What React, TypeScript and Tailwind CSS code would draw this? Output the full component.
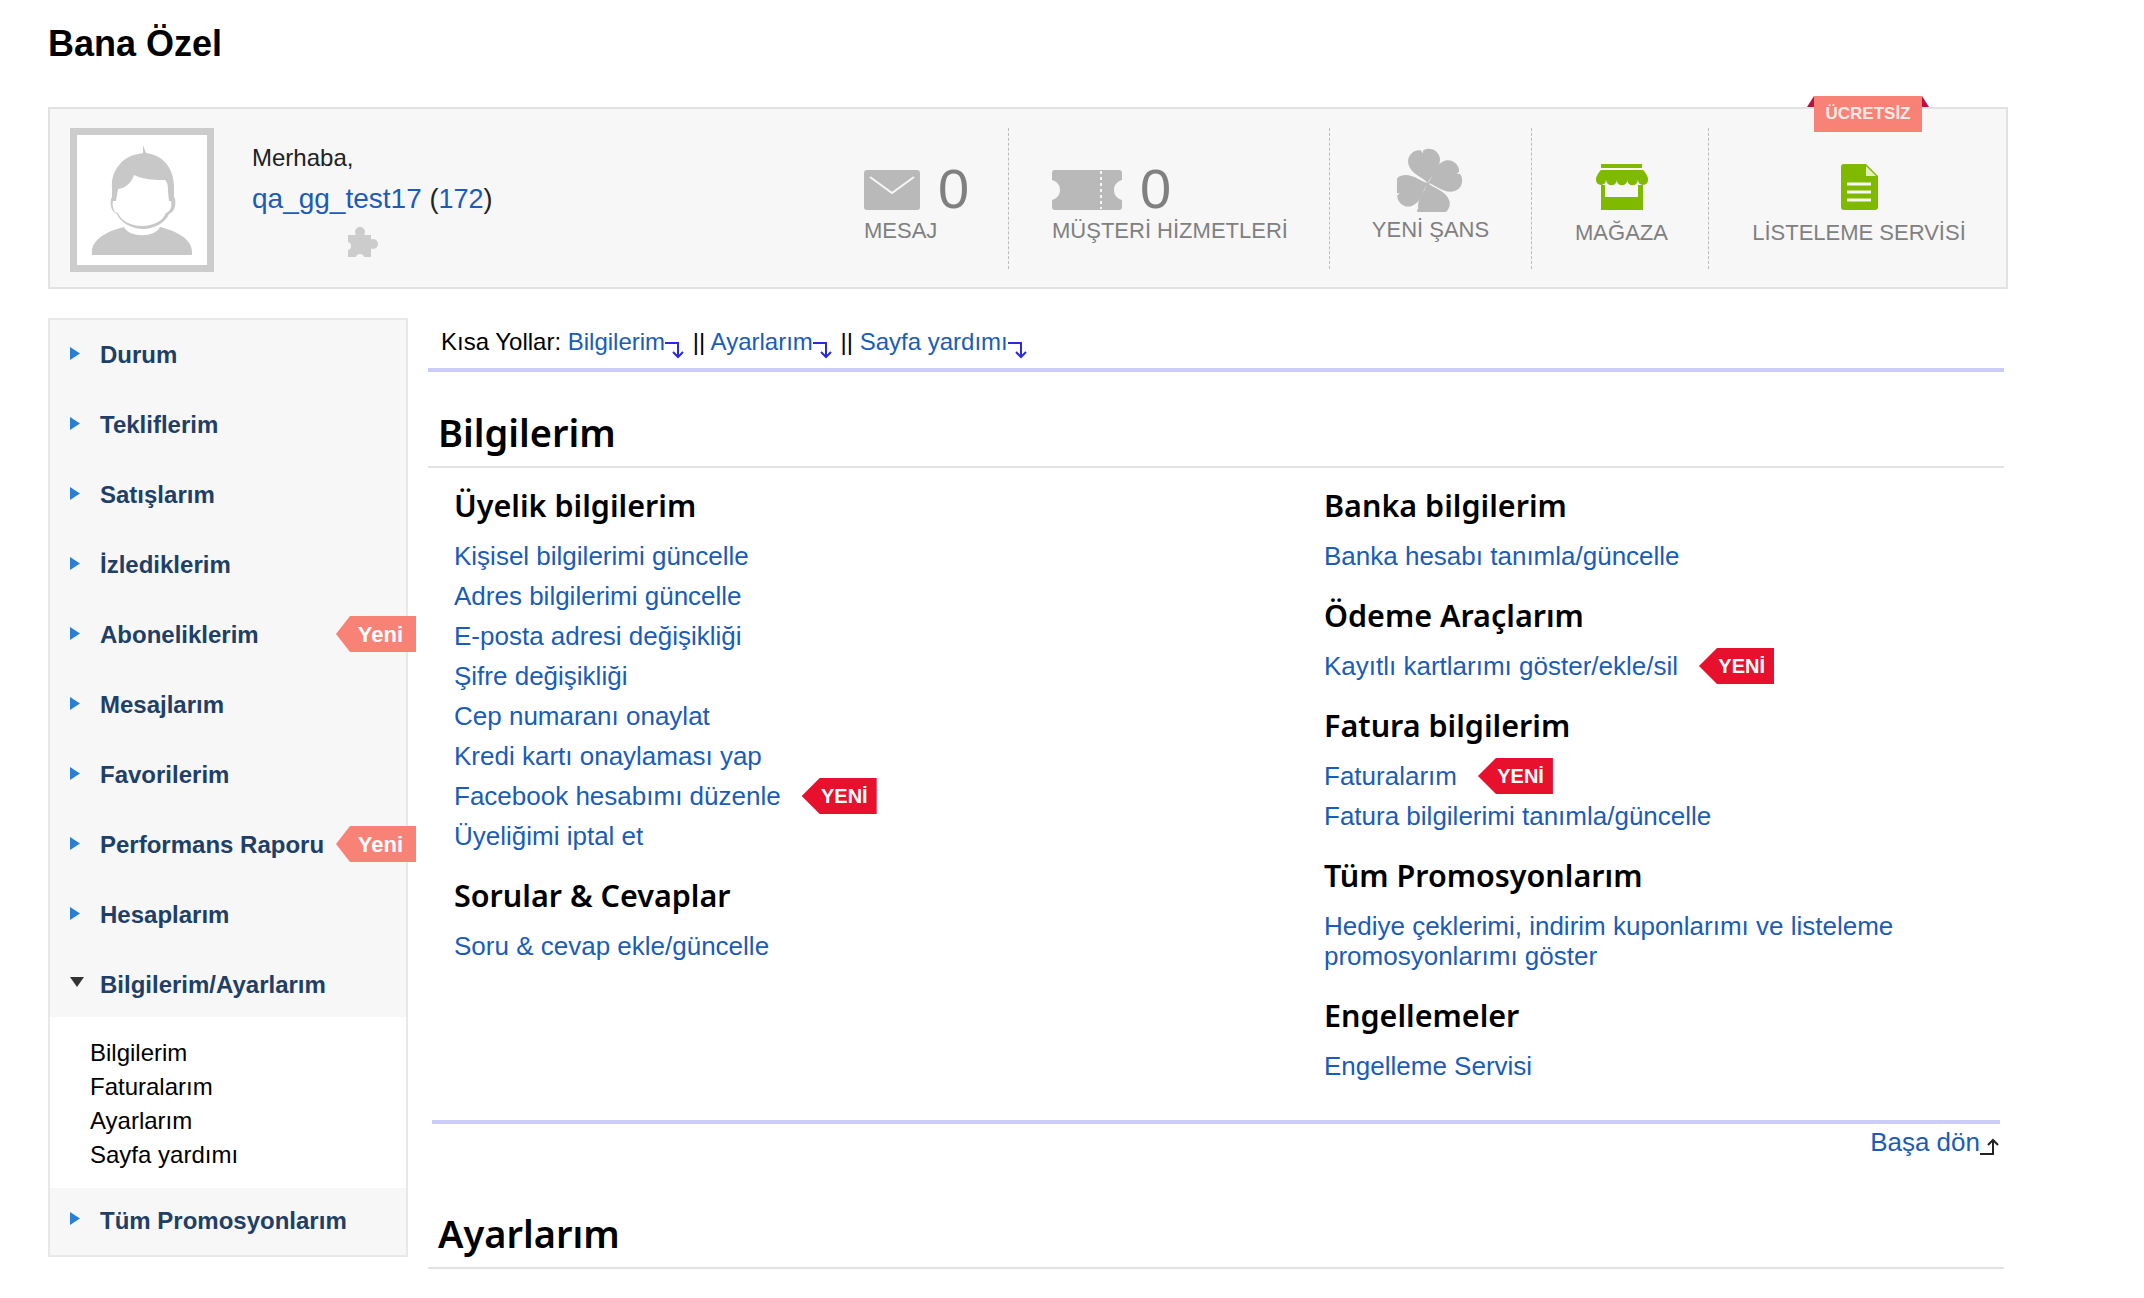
// Sol menü: her satır 70px, "Bilgilerim/Ayarlarım" açık durumda.
const MENU: { label: string; yeni?: boolean }[] = [
  { label: 'Durum' },
  { label: 'Tekliflerim' },
  { label: 'Satışlarım' },
  { label: 'İzlediklerim' },
  { label: 'Aboneliklerim', yeni: true },
  { label: 'Mesajlarım' },
  { label: 'Favorilerim' },
  { label: 'Performans Raporu', yeni: true },
  { label: 'Hesaplarım' },
]

const ALT_MENU = ['Bilgilerim', 'Faturalarım', 'Ayarlarım', 'Sayfa yardımı']

const UYELIK = [
  'Kişisel bilgilerimi güncelle',
  'Adres bilgilerimi güncelle',
  'E-posta adresi değişikliği',
  'Şifre değişikliği',
  'Cep numaranı onaylat',
  'Kredi kartı onaylaması yap',
]

const LINK = 'text-[#1b5cb8]'
const HEAD = "mt-[19px] h-10 font-['Noto_Sans',sans-serif] text-[30.5px] leading-10 font-semibold text-black"

function SagOk() {
  return (
    <svg width="21" height="20" viewBox="0 0 21 20" className="mt-[22px] inline-block align-top" fill="none" stroke="#2a2ae0" strokeWidth="2">
      <path d="M0 3h13v14" />
      <path d="M8 12l5 5 5-5" />
    </svg>
  )
}

function KisaYol({ label }: { label: string }) {
  return (
    <>
      <span className={LINK}>{label}</span>
      <SagOk />
    </>
  )
}

function YeniKirmizi() {
  return (
    <span className="ml-[21px] flex h-9 w-[75px] items-center justify-end bg-[#e8112d] pr-[9px] text-[20px] font-bold text-white [clip-path:polygon(18px_0,100%_0,100%_100%,18px_100%,0_50%)]">
      YENİ
    </span>
  )
}

function Ok({ open }: { open?: boolean }) {
  return open ? (
    <svg width="14" height="10" viewBox="0 0 14 10" className="mr-[16px] -translate-y-[3px]">
      <path d="M0 0h14L7 10z" fill="#333" />
    </svg>
  ) : (
    <svg width="10" height="13" viewBox="0 0 10 13" className="mr-[20px] -translate-y-[2px]">
      <path d="M0 0l10 6.5L0 13z" fill="#2a7fd4" />
    </svg>
  )
}

function MenuSatir({ label, yeni, open, h = 'h-[70px]' }: { label: string; yeni?: boolean; open?: boolean; h?: string }) {
  return (
    <div className={`relative flex items-center pl-[20px] text-[24px] font-bold text-[#1f3f66] ${h}`}>
      <Ok open={open} />
      {label}
      {yeni && (
        <span className="absolute top-[16px] right-[-10px] flex h-9 w-20 items-center justify-end bg-[#f98276] pr-[13px] text-[22px] font-bold text-white [clip-path:polygon(14px_0,100%_0,100%_100%,14px_100%,0_50%)]">
          Yeni
        </span>
      )}
    </div>
  )
}

function Avatar() {
  return (
    <div className="mt-[19px] h-36 w-36 shrink-0 self-start border-[7px] border-[#cccccc] bg-white">
      <svg width="130" height="130" viewBox="0 0 130 130">
        <path d="M15 120c-2-16 16-24 32-28 5 11 31 11 36 0 16 4 34 12 32 28z" fill="#c8c8c8" />
        <path d="M66 10l3 8c16 2 28 14 28 34v10c2 2 2 10-1 14-2 2-3 2-4 3-3 8-14 15-26 15s-23-7-26-15c-1-1-2-1-4-3-3-4-3-12-1-14V52c-1-14 8-28 22-32l9-2z" fill="#c8c8c8" />
        <path d="M41 54c8-1 14-7 16-14 10 5 24 5 31 5 3 3 3 6 3 12l1 9h2c1 4 0 9-3 11l-2 1c-3 8-13 13-24 13s-21-5-24-13l-3-1c-2-3-3-7-2-11h3z" fill="#fff" />
      </svg>
    </div>
  )
}

function Yapboz() {
  return (
    <svg width="32" height="30" viewBox="0 0 32 30" className="mt-[12px] ml-[94px]">
      <g fill="#cccccc">
        <circle cx="14" cy="5" r="5" />
        <rect x="2" y="8" width="23" height="22" />
        <circle cx="27" cy="17" r="5" />
      </g>
      <circle cx="1" cy="19" r="4" fill="#f7f7f7" />
      <circle cx="14" cy="31" r="4" fill="#f7f7f7" />
    </svg>
  )
}

function Zarf() {
  return (
    <svg width="56" height="40" viewBox="0 0 56 40">
      <rect width="56" height="40" rx="3" fill="#b9b9b9" />
      <path d="M6 7l22 16L50 7" fill="none" stroke="#f7f7f7" strokeWidth="2" />
    </svg>
  )
}

function Bilet() {
  return (
    <svg width="70" height="40" viewBox="0 0 70 40">
      <path d="M3 0h64a3 3 0 0 1 3 3v7c-6 2-8 6-8 10s2 8 8 10v7a3 3 0 0 1-3 3H3a3 3 0 0 1-3-3v-7c6-2 8-6 8-10S6 12 0 10V3a3 3 0 0 1 3-3z" fill="#b9b9b9" />
      <path d="M49 1v38" stroke="#f7f7f7" strokeWidth="2" strokeDasharray="3 3" />
    </svg>
  )
}

function Yonca() {
  const yaprak = 'M0 0C-3-6-16-12-16-23-16-31-7-36-1-33L0-30 1-33C7-36 16-31 16-23 16-12 3-6 0 0z'
  return (
    <svg width="68" height="64" viewBox="0 0 68 64">
      <g fill="#b9b9b9" transform="translate(31 35)">
        <path d="M0 0c-2 10-5 20-10 29" fill="none" stroke="#b9b9b9" strokeWidth="3" />
        <path d={yaprak} transform="rotate(-10)" />
        <path d={yaprak} transform="rotate(72)" />
        <path d={yaprak} transform="rotate(165)" />
        <path d={yaprak} transform="rotate(250)" />
      </g>
    </svg>
  )
}

function Magaza() {
  return (
    <svg width="52" height="46" viewBox="0 0 52 46" fill="#7fba00">
      <rect x="5" y="0" width="41" height="4" />
      <path d="M5 6h42c2 2 5 6 5 10H0c0-4 3-8 5-10z" />
      <circle cx="5" cy="16" r="5" />
      <circle cx="15.5" cy="16" r="5.3" />
      <circle cx="26" cy="16" r="5.3" />
      <circle cx="36.5" cy="16" r="5.3" />
      <circle cx="47" cy="16" r="5" />
      <path d="M5 21h4v12h33V21h5v25H5z" />
    </svg>
  )
}

function Belge() {
  return (
    <svg width="37" height="46" viewBox="0 0 37 46">
      <path d="M3 0h22l12 12v31a3 3 0 0 1-3 3H3a3 3 0 0 1-3-3V3a3 3 0 0 1 3-3z" fill="#7fba00" />
      <path d="M25 2v10h10z" fill="#e4eeb8" />
      <path d="M6 20h24M6 28h24M6 36h24" stroke="#f7f7f7" strokeWidth="3" />
    </svg>
  )
}

function Sayac({ icon, etiket, className }: { icon: React.ReactNode; etiket: string; className: string }) {
  return (
    <div className={className}>
      <div className="flex h-[61px] items-end gap-[18px] leading-none">
        {icon}
        <span className="-mb-[2px] h-[46px] text-[56px] leading-[46px] text-[#808080]">0</span>
      </div>
      <div className="mt-[8px] text-[22px] leading-[26px] text-[#808080]">{etiket}</div>
    </div>
  )
}

function UstBar() {
  return (
    <div className="relative box-border flex h-[182px] w-[1960px] items-center border-2 border-[#e2e2e2] bg-[#f7f7f7] pl-[20px]">
      <Avatar />
      <div className="ml-[38px] w-[612px] shrink-0 self-start pt-[33px]">
        <div className="text-[24px] leading-[32px] text-[#222222]">Merhaba,</div>
        <div className="mt-[9px] text-[28px] leading-[32px] text-[#222222]">
          <span className={LINK}>qa_gg_test17</span>{' '}
          <span className="text-[27px]">
            (<span className={LINK}>172</span>)
          </span>
        </div>
        <Yapboz />
      </div>
      <Sayac icon={<Zarf />} etiket="MESAJ" className="h-[141px] w-[144px] shrink-0 pt-[21px]" />
      <Sayac
        icon={<Bilet />}
        etiket="MÜŞTERİ HİZMETLERİ"
        className="h-[141px] w-[321px] shrink-0 border-l border-dashed border-[#bbbbbb] pt-[21px] pl-[43px]"
      />
      <div className="flex h-[141px] w-[202px] shrink-0 flex-col items-center border-l border-dashed border-[#bbbbbb] pt-[20px]">
        <Yonca />
        <div className="mt-[5px] text-[22px] leading-[26px] text-[#808080]">YENİ ŞANS</div>
      </div>
      <div className="flex h-[141px] w-[177px] shrink-0 flex-col items-center border-l border-dashed border-[#bbbbbb] pt-[36px] pl-[3px]">
        <Magaza />
        <div className="mt-[10px] text-[22px] leading-[26px] text-[#808080]">MAĞAZA</div>
      </div>
      <div className="flex h-[141px] w-[298px] shrink-0 flex-col items-center border-l border-dashed border-[#bbbbbb] pt-[36px] pl-[3px]">
        <Belge />
        <div className="mt-[10px] text-[22px] leading-[26px] text-[#808080]">LİSTELEME SERVİSİ</div>
      </div>
      {/* ücretsiz kurdelesi kutunun üstüne taşıyor */}
      <div className="absolute top-[-13px] left-[1757px] h-[11px] w-[122px] bg-[#b81040] [clip-path:polygon(7px_0,115px_0,100%_100%,0_100%)]" />
      <div className="absolute top-[-13px] left-[1764px] flex h-9 w-[108px] items-center justify-center bg-[#f98276] text-[17px] font-bold text-[#ffeae6]">
        ÜCRETSİZ
      </div>
    </div>
  )
}

function Sidebar() {
  return (
    <aside className="box-border h-[939px] w-[360px] shrink-0 border-2 border-[#e8e8e8] bg-[#f7f7f7]">
      {MENU.map(m => (
        <MenuSatir key={m.label} label={m.label} yeni={m.yeni} />
      ))}
      <MenuSatir label="Bilgilerim/Ayarlarım" open h="h-[67px] pt-[2px]" />
      <div className="h-[171px] bg-white pt-[19px] pl-[40px] text-[24px] leading-[34px] text-black">
        {ALT_MENU.map(s => (
          <div key={s}>{s}</div>
        ))}
      </div>
      <MenuSatir label="Tüm Promosyonlarım" h="h-[67px] pb-[2px]" />
    </aside>
  )
}

function Icerik() {
  return (
    <main className="ml-5 w-[1576px]">
      <div className="box-border h-[54px] border-b-4 border-[#ccccf8] pl-[13px] text-[24px] leading-[48px] whitespace-nowrap text-black">
        Kısa Yollar: <KisaYol label="Bilgilerim" /> || <KisaYol label="Ayarlarım" /> || <KisaYol label="Sayfa yardımı" />
      </div>

      <h2 className="mt-[38px] box-border h-[58px] border-b-2 border-[#e2e2e2] pl-[10px] font-['Noto_Sans',sans-serif] text-[38px] leading-[44px] font-semibold text-black">
        Bilgilerim
      </h2>

      <div className="flex h-[652px] pl-[26px] text-[26px] leading-10">
        <div className="-mt-[2px] w-[870px]">
          <div className={HEAD}>Üyelik bilgilerim</div>
          <div className="mt-[11px]">
            {UYELIK.map(u => (
              <div key={u} className={LINK}>
                {u}
              </div>
            ))}
            <div className="flex h-10 items-center">
              <span className={LINK}>Facebook hesabımı düzenle</span>
              <YeniKirmizi />
            </div>
            <div className={LINK}>Üyeliğimi iptal et</div>
          </div>
          <div className={HEAD}>Sorular &amp; Cevaplar</div>
          <div className={`mt-[11px] ${LINK}`}>Soru &amp; cevap ekle/güncelle</div>
        </div>
        <div className="-mt-[2px]">
          <div className={HEAD}>Banka bilgilerim</div>
          <div className={`mt-[11px] ${LINK}`}>Banka hesabı tanımla/güncelle</div>
          <div className={HEAD}>Ödeme Araçlarım</div>
          <div className="mt-[11px] flex h-10 items-center">
            <span className={LINK}>Kayıtlı kartlarımı göster/ekle/sil</span>
            <YeniKirmizi />
          </div>
          <div className={HEAD}>Fatura bilgilerim</div>
          <div className="mt-[11px] flex h-10 items-center">
            <span className={LINK}>Faturalarım</span>
            <YeniKirmizi />
          </div>
          <div className={LINK}>Fatura bilgilerimi tanımla/güncelle</div>
          <div className={HEAD}>Tüm Promosyonlarım</div>
          <div className={`mt-[11px] py-[5px] leading-[30px] ${LINK}`}>
            Hediye çeklerimi, indirim kuponlarımı ve listeleme
            <br />
            promosyonlarımı göster
          </div>
          <div className={HEAD}>Engellemeler</div>
          <div className={`mt-[11px] ${LINK}`}>Engelleme Servisi</div>
        </div>
      </div>

      <div className="ml-1 w-[1568px] border-t-4 border-[#ccccf8]">
        <div className="flex h-[37px] items-center justify-end text-[26px]">
          <span className={LINK}>Başa dön</span>
          <svg width="20" height="18" viewBox="0 0 20 18" className="mt-[8px]" fill="none" stroke="#222" strokeWidth="2">
            <path d="M0 16h13V2" />
            <path d="M8 7l5-5 5 5" />
          </svg>
        </div>
      </div>

      <h2 className="mt-[50px] box-border h-[58px] border-b-2 border-[#e2e2e2] pl-[10px] font-['Noto_Sans',sans-serif] text-[38px] leading-[44px] font-semibold text-black">
        Ayarlarım
      </h2>
    </main>
  )
}

export default function App() {
  return (
    <div className="h-[1298px] w-[2144px] overflow-hidden bg-white pl-12 font-['Liberation_Sans',Arial,sans-serif]" lang="tr">
      <h1 className="h-[107px] pt-[21px] text-[36px] leading-[46px] font-bold text-black">Bana Özel</h1>
      <UstBar />
      <div className="mt-[29px] flex">
        <Sidebar />
        <Icerik />
      </div>
    </div>
  )
}
